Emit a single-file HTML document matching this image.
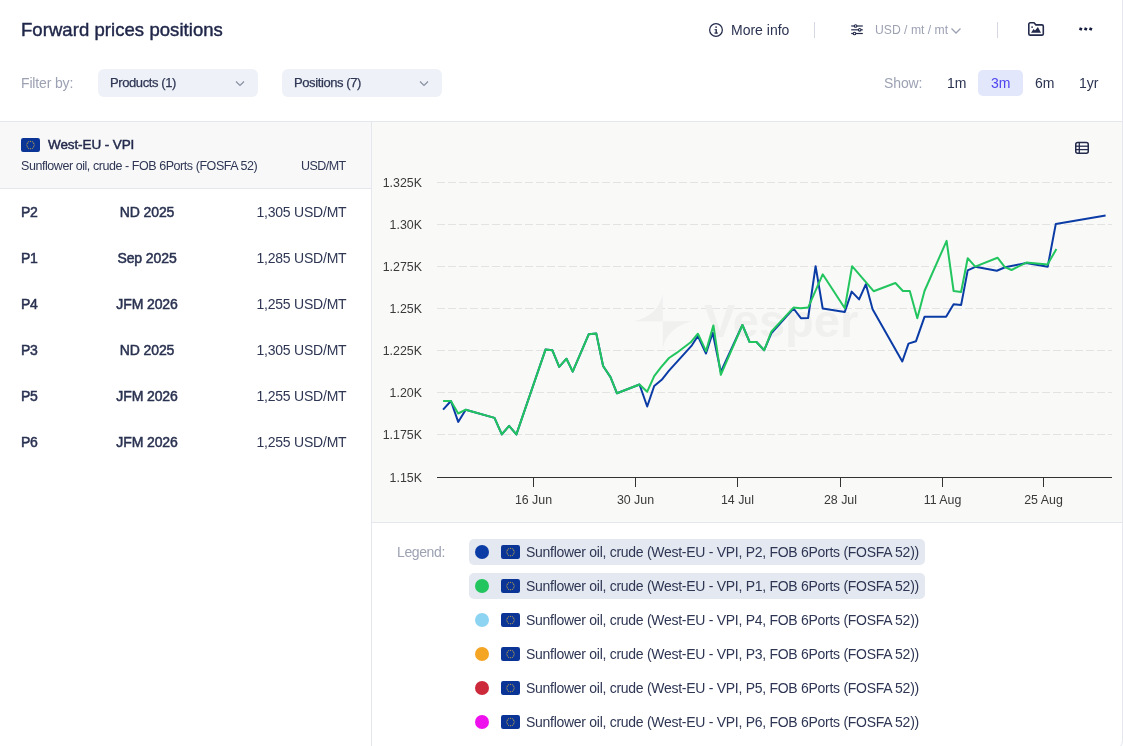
<!DOCTYPE html>
<html><head><meta charset="utf-8">
<style>
*{margin:0;padding:0;box-sizing:border-box}
html,body{width:1123px;height:746px;overflow:hidden;background:#fff}
.a,.dd,.row,.leg{will-change:transform}
body{font-family:"Liberation Sans",sans-serif;color:#2b3352;position:relative}
.a{position:absolute;white-space:nowrap;line-height:1}
.title{left:21px;top:20.5px;font-size:18.5px;color:#1f2648;-webkit-text-stroke:0.45px #1f2648;letter-spacing:0.06px}
.gray{color:#9da2b3}
.dd{position:absolute;top:69px;height:28px;width:160px;background:#eef1f7;border-radius:6px}
.dd span{position:absolute;left:12px;top:6.5px;font-size:13px;letter-spacing:-0.4px;-webkit-text-stroke:0.25px #2e3654;color:#2e3654;line-height:1}
.chev{position:absolute}
.vsep{position:absolute;width:1px;background:#d5d8e2}
.hl{position:absolute;left:0;width:1122px;height:1px;background:#e5e7ee}
.row{position:absolute;left:0;width:371px;height:46px}
.pos{position:absolute;left:21px;font-size:14px;letter-spacing:-0.4px;-webkit-text-stroke:0.5px #2a3251;color:#2a3251;line-height:1}
.per{position:absolute;left:147px;transform:translateX(-50%);font-size:14px;letter-spacing:-0.1px;-webkit-text-stroke:0.5px #2a3251;color:#2a3251;line-height:1}
.val{position:absolute;right:24.6px;font-size:14px;letter-spacing:-0.22px;color:#2e3654;line-height:1}
.leg{position:absolute;left:469px;height:26px;width:456px;border-radius:5px}
.leg.sel{background:#e4e8f0}
.dot{position:absolute;left:6px;top:6px;width:14px;height:14px;border-radius:50%}
.flag{position:absolute;width:19px;height:14px}
.leg .flag{left:32px;top:6px}
.leg .txt{position:absolute;left:57px;top:5.5px;font-size:14px;letter-spacing:-0.28px;color:#2e3654;line-height:1}
</style></head>
<body>
<svg width="0" height="0" style="position:absolute"><defs><symbol id="eu" viewBox="0 0 19 14"><rect width="19" height="14" rx="2.2" fill="#0a3596"/><g fill="#d9b43a"><circle cx="13.20" cy="7.00" r="0.55"/><circle cx="12.70" cy="8.85" r="0.55"/><circle cx="11.35" cy="10.20" r="0.55"/><circle cx="9.50" cy="10.70" r="0.55"/><circle cx="7.65" cy="10.20" r="0.55"/><circle cx="6.30" cy="8.85" r="0.55"/><circle cx="5.80" cy="7.00" r="0.55"/><circle cx="6.30" cy="5.15" r="0.55"/><circle cx="7.65" cy="3.80" r="0.55"/><circle cx="9.50" cy="3.30" r="0.55"/><circle cx="11.35" cy="3.80" r="0.55"/><circle cx="12.70" cy="5.15" r="0.55"/></g></symbol></defs></svg>
<!-- header -->
<div class="a title">Forward prices positions</div>

<svg class="a" style="left:708px;top:22px" width="16" height="16" viewBox="0 0 16 16">
  <circle cx="8" cy="8" r="6.35" fill="none" stroke="#232a4b" stroke-width="1.25"/>
  <rect x="7.5" y="7.1" width="1.4" height="4.4" fill="#232a4b"/>
  <rect x="6.6" y="7.1" width="1.2" height="1.1" fill="#232a4b"/>
  <rect x="6.4" y="10.5" width="3.5" height="1.1" fill="#232a4b"/>
  <circle cx="8.1" cy="5.1" r="0.85" fill="#232a4b"/>
</svg>
<div class="a" style="left:731px;top:23px;font-size:14px;color:#2b3352">More info</div>
<div class="vsep" style="left:814px;top:22px;height:16px"></div>

<svg class="a" style="left:850px;top:23px" width="14" height="14" viewBox="0 0 14 14">
  <g stroke="#232a4b" stroke-width="1.2" fill="none">
  <line x1="1.2" y1="3" x2="12.8" y2="3"/><line x1="1.2" y1="6.8" x2="12.8" y2="6.8"/><line x1="1.2" y1="10.5" x2="12.8" y2="10.5"/>
  </g>
  <g fill="#fff" stroke="#232a4b" stroke-width="1.1">
  <circle cx="5.6" cy="3" r="1.3"/><circle cx="9.7" cy="6.8" r="1.3"/><circle cx="4.5" cy="10.5" r="1.3"/>
  </g>
</svg>
<div class="a gray" style="left:875px;top:24px;font-size:12.2px">USD / mt / mt</div>
<svg class="a" style="left:950px;top:27px" width="12" height="8" viewBox="0 0 12 8">
  <polyline points="1.5,1.5 6,6 10.5,1.5" fill="none" stroke="#9da2b3" stroke-width="1.3"/>
</svg>
<div class="vsep" style="left:997px;top:22px;height:16px"></div>

<svg class="a" style="left:1027px;top:21px" width="18" height="16" viewBox="0 0 18 16">
  <path d="M1.8 3.2 a1.4 1.4 0 0 1 1.4 -1.4 h3.8 l1.9 2.1 h6 a1.4 1.4 0 0 1 1.4 1.4 v7.4 a1.4 1.4 0 0 1 -1.4 1.4 h-11.7 a1.4 1.4 0 0 1 -1.4 -1.4z" fill="none" stroke="#232a4b" stroke-width="1.6" stroke-linejoin="round"/>
  <path d="M4 11.7 L6.6 7.9 L8 9.4 L10.9 5.9 L14 11.7z" fill="#232a4b"/>
  <circle cx="5.1" cy="6.1" r="0.9" fill="#232a4b"/>
</svg>
<svg class="a" style="left:1078px;top:25px" width="16" height="8" viewBox="0 0 16 8">
  <g fill="#151c3d"><rect x="1.3" y="2.6" width="2.8" height="2.8" transform="rotate(20 2.7 4)"/><rect x="6.3" y="2.6" width="2.8" height="2.8" transform="rotate(20 7.7 4)"/><rect x="11.3" y="2.6" width="2.8" height="2.8" transform="rotate(20 12.7 4)"/></g>
</svg>

<!-- filter row -->
<div class="a gray" style="left:21px;top:76px;font-size:14px;letter-spacing:-0.15px">Filter by:</div>
<div class="dd" style="left:98px"><span>Products (1)</span>
  <svg class="chev" style="left:136px;top:11px" width="12" height="8" viewBox="0 0 12 8"><polyline points="2,1.5 6,5.5 10,1.5" fill="none" stroke="#8a90a3" stroke-width="1.2"/></svg></div>
<div class="dd" style="left:282px"><span>Positions (7)</span>
  <svg class="chev" style="left:136px;top:11px" width="12" height="8" viewBox="0 0 12 8"><polyline points="2,1.5 6,5.5 10,1.5" fill="none" stroke="#8a90a3" stroke-width="1.2"/></svg></div>

<div class="a gray" style="left:884px;top:76px;font-size:14px;letter-spacing:-0.1px">Show:</div>
<div class="a" style="left:947px;top:76px;font-size:14px;color:#2b3352">1m</div>
<div class="a" style="left:978px;top:70px;width:45px;height:26px;background:#e2e7fc;border-radius:5px"></div>
<div class="a" style="left:991px;top:76px;font-size:14px;color:#4f44ee">3m</div>
<div class="a" style="left:1035px;top:76px;font-size:14px;color:#2b3352">6m</div>
<div class="a" style="left:1079px;top:76px;font-size:14px;color:#2b3352">1yr</div>

<!-- frame -->
<div class="a" style="left:1122px;top:0;width:1px;height:730px;background:#e5e7ee"></div>
<div class="a" style="left:1100px;top:720px;width:23px;height:29px;border-right:1px solid #e5e7ee;border-bottom:1px solid #e5e7ee;border-bottom-right-radius:8px;background:transparent"></div>
<div class="hl" style="top:121px"></div>

<!-- left panel -->
<div class="a" style="left:0;top:122px;width:371px;height:66px;background:#f8f8f9"></div>
<div class="a" style="left:0;top:188px;width:371px;height:1px;background:#e5e7ee"></div>
<div class="a" style="left:371px;top:122px;width:1px;height:624px;background:#e5e7ee"></div>
<svg class="flag" style="left:21px;top:138px" viewBox="0 0 19 14"><use href="#eu"/></svg>
<div class="a" style="left:48px;top:138px;font-size:13.5px;letter-spacing:-0.1px;-webkit-text-stroke:0.45px #232a4b;color:#232a4b">West-EU - VPI</div>
<div class="a" style="left:21px;top:159.5px;font-size:12.5px;letter-spacing:-0.44px;color:#2e3654">Sunflower oil, crude - FOB 6Ports (FOSFA 52)</div>
<div class="a" style="left:301px;top:159.5px;font-size:12.5px;letter-spacing:-0.55px;color:#2e3654">USD/MT</div>

<div class="row" style="top:189px"><div class="pos" style="top:16px">P2</div><div class="per" style="top:16px">ND 2025</div><div class="val" style="top:16px">1,305 USD/MT</div></div>
<div class="row" style="top:235px"><div class="pos" style="top:16px">P1</div><div class="per" style="top:16px">Sep 2025</div><div class="val" style="top:16px">1,285 USD/MT</div></div>
<div class="row" style="top:281px"><div class="pos" style="top:16px">P4</div><div class="per" style="top:16px">JFM 2026</div><div class="val" style="top:16px">1,255 USD/MT</div></div>
<div class="row" style="top:327px"><div class="pos" style="top:16px">P3</div><div class="per" style="top:16px">ND 2025</div><div class="val" style="top:16px">1,305 USD/MT</div></div>
<div class="row" style="top:373px"><div class="pos" style="top:16px">P5</div><div class="per" style="top:16px">JFM 2026</div><div class="val" style="top:16px">1,255 USD/MT</div></div>
<div class="row" style="top:419px"><div class="pos" style="top:16px">P6</div><div class="per" style="top:16px">JFM 2026</div><div class="val" style="top:16px">1,255 USD/MT</div></div>

<!-- chart -->
<div class="a" style="left:372px;top:122px;width:750px;height:400px;background:#f9f9f8"></div>
<div class="a" style="left:372px;top:522px;width:750px;height:1px;background:#e5e7ee"></div>
<svg class="a" style="left:0;top:0" width="1123" height="746" viewBox="0 0 1123 746">
  <!-- table icon -->
  <g>
    <rect x="1075.75" y="142.5" width="12.5" height="10.8" rx="2" fill="#fff" stroke="#232a4b" stroke-width="1.5"/>
    <line x1="1075.75" y1="146.2" x2="1088.25" y2="146.2" stroke="#232a4b" stroke-width="1.3"/>
    <line x1="1075.75" y1="149.6" x2="1088.25" y2="149.6" stroke="#232a4b" stroke-width="1.3"/>
    <line x1="1079.3" y1="142.5" x2="1079.3" y2="153.3" stroke="#232a4b" stroke-width="1.3"/>
  </g>
  <!-- grid -->
  <g stroke="#e3e3e3" stroke-width="1" stroke-dasharray="8 3">
    <line x1="437" y1="182.5" x2="1112" y2="182.5"/>
    <line x1="437" y1="224.5" x2="1112" y2="224.5"/>
    <line x1="437" y1="266.5" x2="1112" y2="266.5"/>
    <line x1="437" y1="308.5" x2="1112" y2="308.5"/>
    <line x1="437" y1="350.5" x2="1112" y2="350.5"/>
    <line x1="437" y1="392.5" x2="1112" y2="392.5"/>
    <line x1="437" y1="434.5" x2="1112" y2="434.5"/>
  </g>
  <line x1="437" y1="477.5" x2="1112" y2="477.5" stroke="#333" stroke-width="1"/>
  <g stroke="#333" stroke-width="1">
    <line x1="533.5" y1="477" x2="533.5" y2="487"/>
    <line x1="635.5" y1="477" x2="635.5" y2="487"/>
    <line x1="737.5" y1="477" x2="737.5" y2="487"/>
    <line x1="840.5" y1="477" x2="840.5" y2="487"/>
    <line x1="942.5" y1="477" x2="942.5" y2="487"/>
    <line x1="1043.5" y1="477" x2="1043.5" y2="487"/>
  </g>
  <g font-family="Liberation Sans" font-size="12.4" fill="#3a3a3a" text-anchor="end">
    <text x="422" y="187">1.325K</text>
    <text x="422" y="229">1.30K</text>
    <text x="422" y="271">1.275K</text>
    <text x="422" y="313">1.25K</text>
    <text x="422" y="355">1.225K</text>
    <text x="422" y="397">1.20K</text>
    <text x="422" y="439">1.175K</text>
    <text x="422" y="482">1.15K</text>
  </g>
  <g font-family="Liberation Sans" font-size="12.4" fill="#3a3a3a" text-anchor="middle">
    <text x="533.5" y="504">16 Jun</text>
    <text x="635.5" y="504">30 Jun</text>
    <text x="737.5" y="504">14 Jul</text>
    <text x="840.5" y="504">28 Jul</text>
    <text x="942.5" y="504">11 Aug</text>
    <text x="1043.5" y="504">25 Aug</text>
  </g>
  <!-- watermark -->
  <g fill="#f0f0ef">
    <path d="M662.7 321.2 L662.7 293.5 Q659 315 634.5 321.2Z M662.7 321.2 L691.3 321.2 Q667 328 662.7 348.3Z"/>
    <text x="704" y="337" font-family="Liberation Sans" font-weight="bold" font-size="47">Vesper</text>
  </g>
  <!-- lines -->
  <polyline id="blue" fill="none" stroke="#0b3ca6" stroke-width="2" stroke-linejoin="round" points="443.1,409.7 450.9,401 458.2,421.9 465.7,409.7 494.5,417.9 501.8,434.4 509.1,425.9 516.4,434.4 545.5,349.6 552.4,350.3 559.2,366.8 566.5,358.7 572.7,371.6 588.7,334.3 596.3,333.6 603.1,366 610.5,377.1 617,393.3 639.5,384.5 647.2,406.5 654.2,386 661.7,379.8 669,370.7 691.9,345.3 697.9,336 706,353.5 712.7,332.8 720.8,372 742.4,325 749.6,342 756.5,342 764.2,350.2 771.3,333.4 793.5,308.5 800.9,318.2 808.1,318 815.6,266.2 822.7,308.5 844.8,311.9 851.7,291.6 859.1,299.4 865.9,284.2 872.6,309.3 902.3,361.5 908.5,343.6 916,341.2 924.5,316.8 946.1,316.8 953.6,304.2 961.1,305.1 967.7,270.4 975.3,266.8 996.8,270.7 1005.1,267.3 1026.3,263 1047.7,266.7 1055.8,223.9 1105.6,215.5"/>
  <polyline id="green" fill="none" stroke="#22c55e" stroke-width="2" stroke-linejoin="round" points="443.1,401 450.9,401 458.2,413.5 465.7,409.7 494.5,417.9 501.8,434.4 509.1,425.9 516.4,434.4 545.5,349.6 552.4,350.3 559.2,366.8 566.5,358.7 572.7,371.6 588.7,334.3 596.3,333.6 603.1,366 610.5,377.1 617,393.3 639.5,384.5 647.2,391.7 654.2,376.2 661.1,367.1 669,358 676.2,353.2 690.7,342.3 697.9,333.7 706,351.2 713.4,325.4 720.8,374.8 742.4,325 749.6,342 756.5,342 764.2,350.2 771.3,331.8 793.5,307.6 800.6,308.2 808.2,307.4 822.7,274.3 844.8,308.2 852.1,266.2 873.6,291.2 895.4,283 902.9,291 909.8,291 917.3,318.3 924.5,291 946.6,240.9 953.6,291 961.1,292 967.7,258.2 975.2,266.6 997.5,257.7 1004.8,267.1 1011.5,270 1026.3,262.6 1047.5,264.4 1056.4,249"/>
</svg>

<!-- legend -->
<div class="a gray" style="left:397px;top:545px;font-size:14px;letter-spacing:-0.39px">Legend:</div>
<div class="leg sel" style="top:539px"><div class="dot" style="background:#0b3ca6"></div><svg class="flag" viewBox="0 0 19 14"><use href="#eu"/></svg><div class="txt">Sunflower oil, crude (West-EU - VPI, P2, FOB 6Ports (FOSFA 52))</div></div>
<div class="leg sel" style="top:573px"><div class="dot" style="background:#22c55e"></div><svg class="flag" viewBox="0 0 19 14"><use href="#eu"/></svg><div class="txt">Sunflower oil, crude (West-EU - VPI, P1, FOB 6Ports (FOSFA 52))</div></div>
<div class="leg" style="top:607px"><div class="dot" style="background:#8dd3f2"></div><svg class="flag" viewBox="0 0 19 14"><use href="#eu"/></svg><div class="txt">Sunflower oil, crude (West-EU - VPI, P4, FOB 6Ports (FOSFA 52))</div></div>
<div class="leg" style="top:641px"><div class="dot" style="background:#f5a524"></div><svg class="flag" viewBox="0 0 19 14"><use href="#eu"/></svg><div class="txt">Sunflower oil, crude (West-EU - VPI, P3, FOB 6Ports (FOSFA 52))</div></div>
<div class="leg" style="top:675px"><div class="dot" style="background:#cc2a3a"></div><svg class="flag" viewBox="0 0 19 14"><use href="#eu"/></svg><div class="txt">Sunflower oil, crude (West-EU - VPI, P5, FOB 6Ports (FOSFA 52))</div></div>
<div class="leg" style="top:709px"><div class="dot" style="background:#ee11ee"></div><svg class="flag" viewBox="0 0 19 14"><use href="#eu"/></svg><div class="txt">Sunflower oil, crude (West-EU - VPI, P6, FOB 6Ports (FOSFA 52))</div></div>
</body></html>
